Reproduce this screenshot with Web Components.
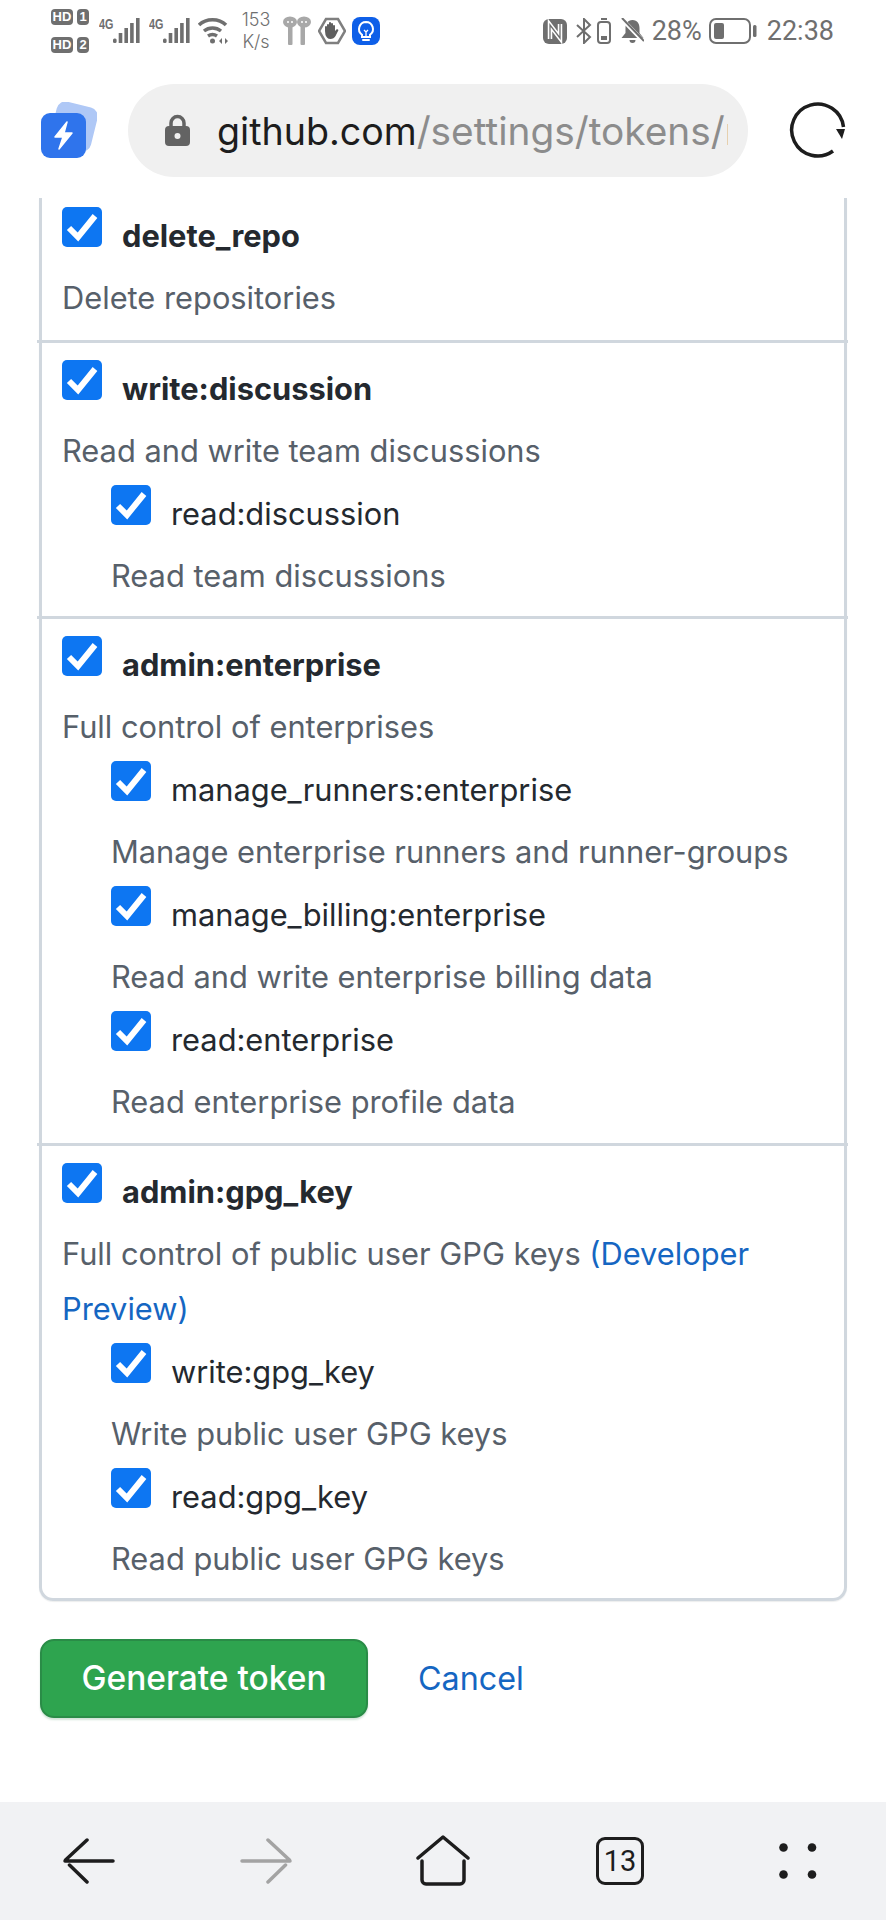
<!DOCTYPE html>
<html>
<head>
<meta charset="utf-8">
<title>New personal access token</title>
<style>
  html, body {
    margin: 0;
    background: #fff;
    font-family: "Inter", "Liberation Sans", sans-serif;
  }
  body {
    display: flex;
    flex-direction: column;
    width: 886px;
    height: 1920px;
    overflow: hidden;
  }
</style>
</head>
<body>
<status-bar></status-bar>
<address-bar></address-bar>
<scope-card>
  <scope-group>
    <scope-row name="delete_repo" strong>Delete repositories</scope-row>
  </scope-group>
  <scope-group>
    <scope-row name="write:discussion" strong>Read and write team discussions</scope-row>
    <scope-row name="read:discussion">Read team discussions</scope-row>
  </scope-group>
  <scope-group>
    <scope-row name="admin:enterprise" strong>Full control of enterprises</scope-row>
    <scope-row name="manage_runners:enterprise">Manage enterprise runners and runner-groups</scope-row>
    <scope-row name="manage_billing:enterprise">Read and write enterprise billing data</scope-row>
    <scope-row name="read:enterprise">Read enterprise profile data</scope-row>
  </scope-group>
  <scope-group>
    <scope-row name="admin:gpg_key" strong>Full control of public user GPG keys <a>(Developer</a> <a>Preview)</a></scope-row>
    <scope-row name="write:gpg_key">Write public user GPG keys</scope-row>
    <scope-row name="read:gpg_key">Read public user GPG keys</scope-row>
  </scope-group>
</scope-card>
<form-actions></form-actions>
<nav-bar></nav-bar>

<script>
class StatusBar extends HTMLElement {
  static get style() {
    return `
      :host {
        display: flex;
        align-items: center;
        justify-content: space-between;
        height: 62px;
        padding: 0 52px 0 51px;
        color: #6f6f6f;
        flex: none;
      }
      .left, .right {
        display: flex;
        align-items: center;
      }
      svg {
        display: block;
        flex: none;
      }
      .sims {
        display: grid;
        grid-template-columns: auto auto;
        gap: 12px 4px;
      }
      .hd {
        font: 700 13px/16px "Liberation Sans", sans-serif;
        background: #6f6f6f;
        color: #fff;
        border-radius: 4px;
        text-align: center;
      }
      .hd.a { width: 22px; }
      .hd.b { width: 12px; }
      .net {
        position: relative;
        width: 42px;
        height: 30px;
        margin-left: 10px;
      }
      .net + .net { margin-left: 8px; }
      .net span {
        position: absolute;
        left: 0;
        top: 1px;
        font: 700 15px/14px "Liberation Sans", sans-serif;
        transform: scaleX(.72);
        transform-origin: 0 0;
      }
      .speed {
        width: 36px;
        margin: 0 9px 0 9px;
        font-size: 18px;
        font-weight: 300;
        line-height: 22px;
        text-align: center;
        color: #6f6f6f;
      }
      .pct, .time {
        font-family: Roboto, sans-serif;
        font-size: 27px;
      }
    `;
  }

  static get content() {
    let bars = `<svg width="42" height="30" viewBox="0 0 42 30" fill="currentColor"><rect x="14" y="22.500" width="3.600" height="4.500" rx="1.500"/><rect x="19.700" y="17" width="3.600" height="10"/><rect x="25.400" y="12" width="3.600" height="15"/><rect x="31.100" y="7" width="3.600" height="20"/><rect x="37" y="2" width="3.600" height="25"/></svg>`;
    return `
      <div class="left">
        <div class="sims">
          <span class="hd a">HD</span><span class="hd b">1</span>
          <span class="hd a">HD</span><span class="hd b">2</span>
        </div>
        <div class="net"><span>4G</span>${bars}</div>
        <div class="net"><span>4G</span>${bars}</div>
        <svg width="31" height="28" viewBox="0 0 31 28" fill="none" stroke="currentColor" stroke-width="3.500" style="margin-left:7px"><path d="M1 8C8 1 21 1 28 8"/><path d="M6 14c5-4 12-4 17 0"/><path d="M10 19c3-2 6-2 9 0"/><circle cx="14.500" cy="24" r="2.500" fill="currentColor" stroke="none"/><path d="M24 21l-3 3 3 3zM27 21l3 3-3 3z" fill="currentColor" stroke="none"/></svg>
        <div class="speed">153<br>K/s</div>
        <svg width="28" height="30" viewBox="0 0 28 30" fill="#a8a8a8"><ellipse cx="7" cy="6" rx="7" ry="5.500"/><ellipse cx="21" cy="6" rx="7" ry="5.500"/><rect x="5" y="7" width="4.500" height="22" rx="1"/><rect x="17.500" y="7" width="4.500" height="22" rx="1"/><circle cx="5" cy="6" r="1" fill="#fff"/><circle cx="9" cy="6" r="1" fill="#fff"/><circle cx="19" cy="6" r="1" fill="#fff"/><circle cx="23" cy="6" r="1" fill="#fff"/></svg>
        <svg width="28" height="28" viewBox="0 0 28 28" style="margin-left:7px"><path d="M8 2h12l7 12-7 12H8L1 14z" fill="#fff" stroke="#7f7f7f" stroke-width="2.500"/><path d="M7 14V10a1 1 0 0 1 2 0V8a1 1 0 0 1 2 0V6a1 1 0 0 1 2 0v1a1 1 0 0 1 2 0v2a1 1 0 0 1 2 0v5l2-2 1.500 1-3 6c-1 2-3 3-5 3-3 0-4-2-5-4z" fill="#5f5f5f"/></svg>
        <svg width="28" height="28" viewBox="0 0 28 28" style="margin-left:6px"><rect width="28" height="28" rx="8" fill="#0e5fe8"/><path d="M14 5a7 7 0 0 0-4 12.700V20h8v-2.300A7 7 0 0 0 14 5zM11 23h6" fill="none" stroke="#fff" stroke-width="2" stroke-linecap="round"/><path d="M12 13l2 2 2-2M14 15v4" fill="none" stroke="#fff" stroke-width="1.300"/></svg>
      </div>
      <div class="right">
        <svg width="24" height="25" viewBox="0 0 24 25"><rect width="24" height="25" rx="6" fill="#6f6f6f"/><path d="M7 20V6l10 13V5" fill="none" stroke="#fff" stroke-width="4.500"/><path d="M7 20V6l10 13V5" fill="none" stroke="#6f6f6f" stroke-width="1.300"/></svg>
        <svg width="16" height="26" viewBox="0 0 16 26" fill="none" stroke="#6f6f6f" stroke-width="2" style="margin-left:9px"><path d="M1 7l13 12-6 6V1l6 6L1 19"/></svg>
        <svg width="14" height="26" viewBox="0 0 14 26" fill="none" stroke="#6f6f6f" stroke-width="2" style="margin-left:5px"><rect x="1" y="4" width="12" height="21" rx="3"/><rect x="4" y="0" width="6" height="2" fill="#6f6f6f" stroke="none"/><rect x="4" y="18" width="6" height="4" fill="#6f6f6f" stroke="none"/></svg>
        <svg width="23" height="26" viewBox="0 0 23 26" fill="#6f6f6f" style="margin-left:10px"><path d="M11.500 2c5 0 7 4 7 8v5l4 5H.5l4-5v-5c0-4 2-8 7-8zM8.500 22h6a3 3 0 0 1-6 0z"/><path d="M0 0l22 23" stroke="#fff" stroke-width="4"/><path d="M1 0l22 23" stroke="#6f6f6f" stroke-width="2"/></svg>
        <span class="pct" style="margin-left:8px">28%</span>
        <svg width="48" height="26" viewBox="0 0 48 26" style="margin-left:7px"><rect x="1" y="1" width="40" height="24" rx="6" fill="none" stroke="#6f6f6f" stroke-width="2"/><rect x="5" y="5" width="10" height="16" rx="2" fill="#6f6f6f"/><rect x="44" y="7" width="3.500" height="12" rx="1.500" fill="#6f6f6f"/></svg>
        <span class="time" style="margin-left:10px">22:38</span>
      </div>
    `;
  }

  constructor() {
    super();
    let shadow = this.attachShadow({ mode: "open" });
    shadow.innerHTML = `<style>${StatusBar.style}</style>${StatusBar.content}`;
  }
}

class AddressBar extends HTMLElement {
  static get style() {
    return `
      :host {
        display: flex;
        align-items: center;
        height: 136px;
        padding: 0 0 0 40px;
        box-sizing: border-box;
        flex: none;
      }
      .logo {
        flex: none;
        display: block;
        margin-right: 31px;
      }
      .pill {
        display: flex;
        align-items: center;
        width: 620px;
        height: 93px;
        box-sizing: border-box;
        padding: 0 20px 0 37px;
        background: #f0f0f0;
        border-radius: 47px;
        overflow: hidden;
        flex: none;
      }
      .url {
        margin-left: 27px;
        font-size: 38.800px;
        white-space: nowrap;
        overflow: hidden;
        color: #8c8c8c;
        flex: 1;
        min-width: 0;
      }
      .url b {
        font-size: 37.600px;
        font-weight: 400;
        color: #1d1d1d;
      }
      .reload {
        flex: none;
        display: block;
        margin-left: 41px;
      }
    `;
  }

  static get content() {
    return `
      <svg class="logo" width="57" height="57" viewBox="0 0 57 57">
        <rect x="13" y="2" width="42" height="45" rx="9" fill="#afc8f6" transform="rotate(14 34 24)"/>
        <rect x="1" y="11" width="45" height="45" rx="9" fill="#2f74ec"/>
        <path d="M27 20L15 35h8l-4 12 13-16h-8z" fill="#fff" stroke="#fff" stroke-width="1.500" stroke-linejoin="round"/>
      </svg>
      <div class="pill">
        <svg width="25" height="32" viewBox="0 0 25 32" style="flex:none"><path d="M6 14V9a6.500 6.500 0 0 1 13 0v5" fill="none" stroke="#636363" stroke-width="3.500"/><rect y="12" width="25" height="20" rx="4" fill="#636363"/><circle cx="12.500" cy="22" r="3" fill="#f0f0f0"/></svg>
        <div class="url"><b>github.com</b>/settings/tokens/new</div>
      </div>
      <svg class="reload" width="58" height="58" viewBox="0 0 58 58" fill="none">
        <path d="M44 50A26 26 0 1 1 54.500 26" stroke="#1d1d1d" stroke-width="3.500"/>
        <path d="M47 28h9l-3 10z" fill="#1d1d1d"/>
      </svg>
    `;
  }

  constructor() {
    super();
    let shadow = this.attachShadow({ mode: "open" });
    shadow.innerHTML = `<style>${AddressBar.style}</style>${AddressBar.content}`;
  }
}

class ScopeCard extends HTMLElement {
  static get style() {
    return `
      :host {
        display: block;
        flex: none;
        margin: 0 39px;
        border: 3px solid #d0d7de;
        border-top: 0;
        border-radius: 0 0 14px 14px;
        box-shadow: 0 1px 1px rgba(31, 35, 40, .08);
      }
    `;
  }

  constructor() {
    super();
    let shadow = this.attachShadow({ mode: "open" });
    shadow.innerHTML = `<style>${ScopeCard.style}</style><slot></slot>`;
  }
}

class ScopeGroup extends HTMLElement {
  static get style() {
    return `
      :host {
        display: block;
        padding: 11px 0 13px;
        border-top: 3px solid #d0d7de;
        margin: 0 -4px 0 -5px;
      }
      :host(:first-child) {
        border-top: 0;
        padding: 3px 0 14px;
      }
      :host(:last-child) {
        padding-bottom: 11px;
      }
    `;
  }

  constructor() {
    super();
    let shadow = this.attachShadow({ mode: "open" });
    shadow.innerHTML = `<style>${ScopeGroup.style}</style><slot></slot>`;
  }
}

class ScopeRow extends HTMLElement {
  static get style() {
    return `
      :host {
        display: block;
        padding-left: 25px;
        padding-right: 22px;
      }
      :host([strong]) .name {
        font-weight: 700;
      }
      :host(:not([strong])) {
        padding-left: 74px;
      }
      .head {
        display: flex;
        align-items: flex-start;
        height: 66px;
      }
      .box {
        flex: none;
        display: block;
        width: 40px;
        height: 40px;
        margin-top: 6px;
        margin-right: 20px;
      }
      .name {
        color: #24292f;
        font-size: 30.800px;
        line-height: 62px;
        margin-top: 4px;
      }
      .note {
        color: #57606a;
        font-size: 30.800px;
        line-height: 55.800px;
        padding-top: 3px;
      }
      ::slotted(a) {
        color: #1566c2;
      }
    `;
  }

  static get content() {
    return `
      <div class="head">
        <svg class="box" viewBox="0 0 40 40"><rect width="40" height="40" rx="5" fill="#0d76f2"/><path d="M7 21l9 9L33 9" fill="none" stroke="#fff" stroke-width="6"/></svg>
        <span class="name"></span>
      </div>
      <div class="note"><slot></slot></div>
    `;
  }

  constructor() {
    super();
    let shadow = this.attachShadow({ mode: "open" });
    shadow.innerHTML = `<style>${ScopeRow.style}</style>${ScopeRow.content}`;
  }

  connectedCallback() {
    this.shadowRoot.querySelector(".name").textContent = this.getAttribute("name");
  }
}

class FormActions extends HTMLElement {
  static get style() {
    return `
      :host {
        display: flex;
        align-items: center;
        flex: none;
        margin-top: 38px;
        padding-left: 40px;
        height: 79px;
      }
      .generate {
        display: flex;
        align-items: center;
        justify-content: center;
        width: 328px;
        height: 79px;
        box-sizing: border-box;
        background: #2ea44f;
        border: 2px solid #2a8c47;
        border-radius: 14px;
        box-shadow: 0 2px 2px rgba(31, 120, 60, .2);
        color: #fff;
        font-size: 33.500px;
        font-weight: 500;
      }
      .cancel {
        margin-left: 50px;
        color: #1566c2;
        font-size: 32.300px;
      }
    `;
  }

  static get content() {
    return `
      <div class="generate">Generate token</div>
      <span class="cancel">Cancel</span>
    `;
  }

  constructor() {
    super();
    let shadow = this.attachShadow({ mode: "open" });
    shadow.innerHTML = `<style>${FormActions.style}</style>${FormActions.content}`;
  }
}

class NavBar extends HTMLElement {
  static get style() {
    return `
      :host {
        display: flex;
        align-items: center;
        gap: 125px;
        flex: none;
        margin-top: auto;
        height: 118px;
        padding-left: 63px;
        background: #f1f2f4;
      }
      svg {
        display: block;
        flex: none;
      }
      .home { margin-left: -2px; }
      .more { margin-left: 9px; }
      .tabs {
        display: flex;
        align-items: center;
        justify-content: center;
        flex: none;
        width: 48px;
        height: 48px;
        box-sizing: border-box;
        border: 3.500px solid #1d1d1d;
        border-radius: 9px;
        font-family: Roboto, sans-serif;
        font-size: 29px;
        color: #1d1d1d;
      }
    `;
  }

  static get content() {
    return `
      <svg width="52" height="46" viewBox="0 0 52 46" fill="none" stroke="#1d1d1d" stroke-width="3.500" stroke-linecap="round"><path d="M2 23H50M24 2L2.500 22M6.500 27L24 44"/></svg>
      <svg width="52" height="46" viewBox="0 0 52 46" fill="none" stroke="#a3a3a3" stroke-width="3.500" stroke-linecap="round"><path d="M2 23H50M28 2l21.500 20M45.500 27L28 44"/></svg>
      <svg class="home" width="56" height="52" viewBox="0 0 56 52" fill="none" stroke="#1d1d1d" stroke-width="3.500" stroke-linecap="round" stroke-linejoin="round"><path d="M3 23L28 2l25 21M7 26v19a4 4 0 0 0 4 4h34a4 4 0 0 0 4-4V26"/></svg>
      <div class="tabs">13</div>
      <svg class="more" width="40" height="36" viewBox="0 0 40 36" fill="#1d1d1d"><circle cx="5.500" cy="4.500" r="4.300"/><circle cx="34" cy="4.500" r="4.300"/><circle cx="5.500" cy="31.500" r="4.300"/><circle cx="34" cy="31.500" r="4.300"/></svg>
    `;
  }

  constructor() {
    super();
    let shadow = this.attachShadow({ mode: "open" });
    shadow.innerHTML = `<style>${NavBar.style}</style>${NavBar.content}`;
  }
}

customElements.define("status-bar", StatusBar);
customElements.define("address-bar", AddressBar);
customElements.define("scope-card", ScopeCard);
customElements.define("scope-group", ScopeGroup);
customElements.define("scope-row", ScopeRow);
customElements.define("form-actions", FormActions);
customElements.define("nav-bar", NavBar);
</script>
</body>
</html>
